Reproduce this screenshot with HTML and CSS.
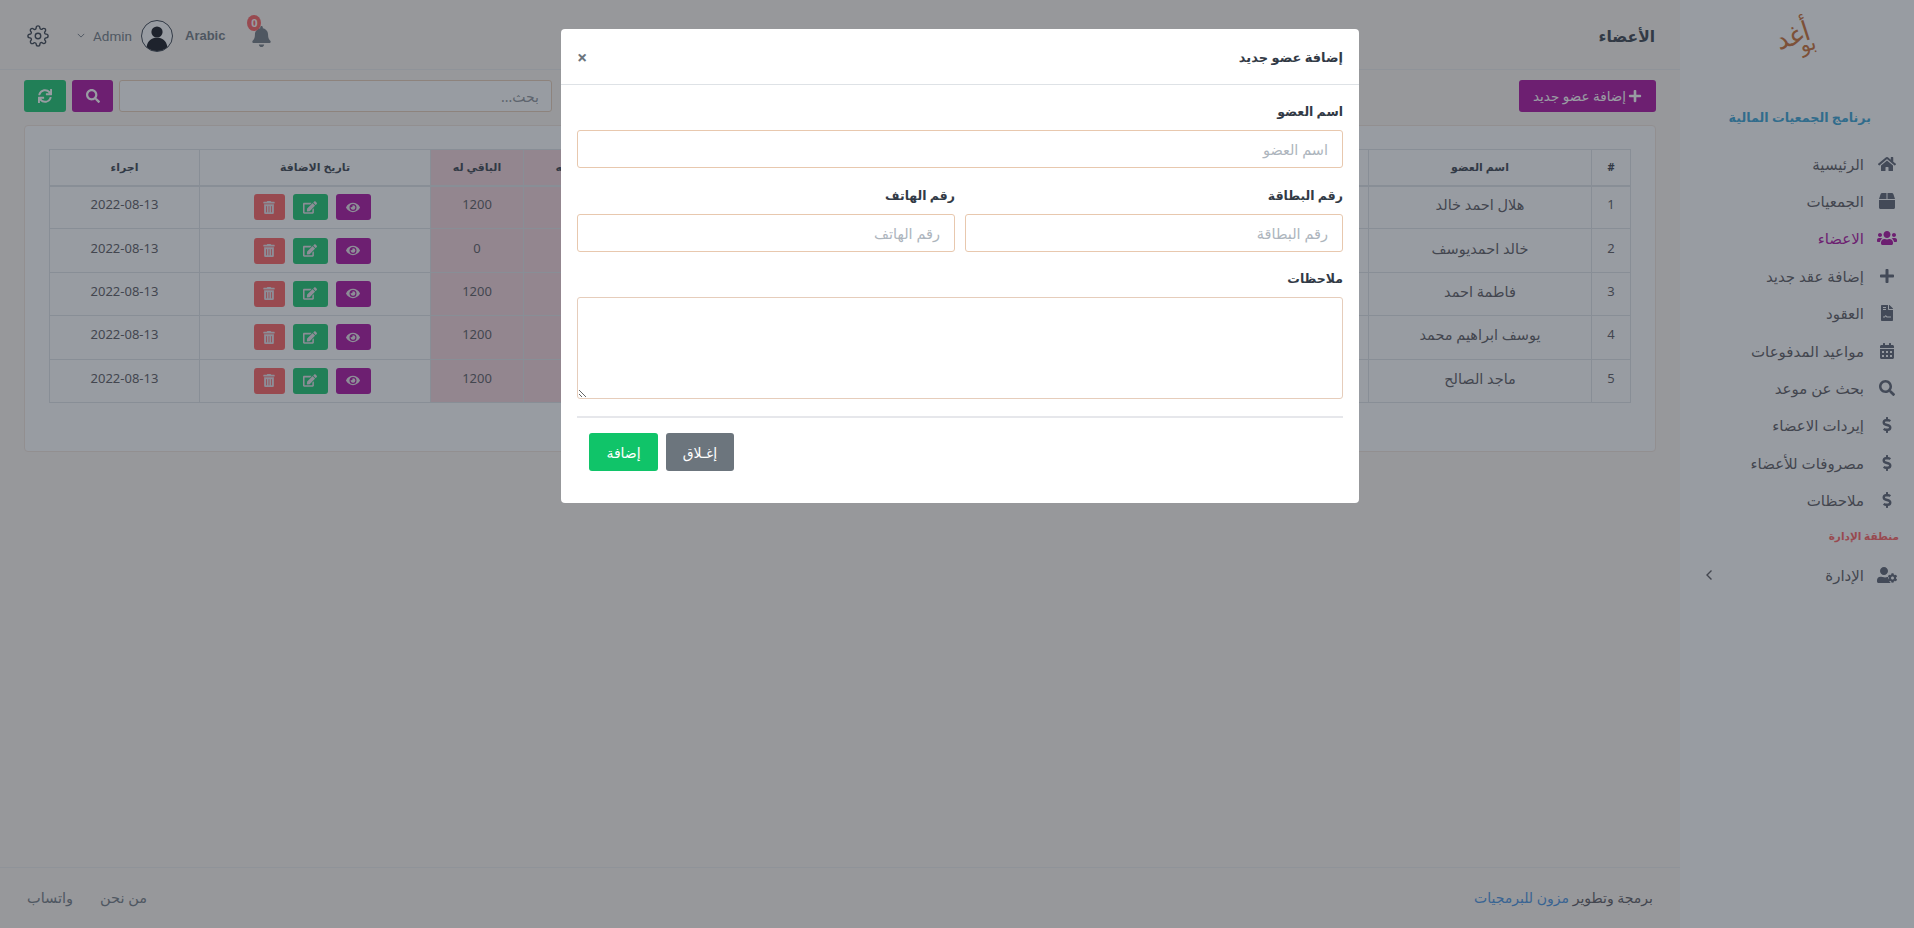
FILE: index.html
```html
<!DOCTYPE html>
<html lang="ar" dir="rtl">
  <head>
    <meta charset="UTF-8" />
    <meta name="viewport" content="width=device-width, initial-scale=1.0" />
    <title>الأعضاء</title>
    <link rel="stylesheet" href="styles.css">
  </head>
  <body>
    <svg class="sprites" xmlns="http://www.w3.org/2000/svg">
      <symbol id="i-home" viewBox="0 0 576 512"><path d="M280.37 148.26L96 300.11V464a16 16 0 0 0 16 16l112.06-.29a16 16 0 0 0 15.92-16V368a16 16 0 0 1 16-16h64a16 16 0 0 1 16 16v95.64a16 16 0 0 0 16 16.05L464 480a16 16 0 0 0 16-16V300L295.67 148.26a12.19 12.19 0 0 0-15.3 0zM571.6 251.47L488 182.56V44.05a12 12 0 0 0-12-12h-56a12 12 0 0 0-12 12v72.61L318.47 43a48 48 0 0 0-61 0L4.34 251.47a12 12 0 0 0-1.6 16.9l25.5 31A12 12 0 0 0 45.15 301l235.22-193.74a12.19 12.19 0 0 1 15.3 0L530.9 301a12 12 0 0 0 16.9-1.6l25.5-31a12 12 0 0 0-1.7-16.93z"/></symbol>
      <symbol id="i-box" viewBox="0 0 512 512"><path d="M509.5 184.6L458.9 32.8C452.4 13.2 434.1 0 413.4 0H272v192h238.7c-.4-2.5-.4-5-1.2-7.4zM240 0H98.6c-20.7 0-39 13.2-45.5 32.8L2.5 184.6c-.8 2.4-.8 4.9-1.2 7.4H240V0zM0 224v240c0 26.5 21.5 48 48 48h416c26.5 0 48-21.5 48-48V224H0z"/></symbol>
      <symbol id="i-users" viewBox="0 0 640 512"><path d="M96 224c35.3 0 64-28.7 64-64s-28.7-64-64-64-64 28.7-64 64 28.7 64 64 64zm448 0c35.3 0 64-28.7 64-64s-28.7-64-64-64-64 28.7-64 64 28.7 64 64 64zm32 32h-64c-17.6 0-33.5 7.1-45.1 18.6 40.3 22.1 68.9 62 75.1 109.4h66c17.7 0 32-14.3 32-32v-32c0-35.3-28.7-64-64-64zm-256 0c61.9 0 112-50.1 112-112S381.9 32 320 32 208 82.1 208 144s50.1 112 112 112zm76.8 32h-8.3c-20.8 10-43.9 16-68.5 16s-47.6-6-68.5-16h-8.3C179.6 288 128 339.6 128 403.2V432c0 26.5 21.5 48 48 48h288c26.5 0 48-21.5 48-48v-28.8c0-63.6-51.6-115.2-115.2-115.2zm-223.7-13.4C161.5 263.1 145.6 256 128 256H64c-35.3 0-64 28.7-64 64v32c0 17.7 14.3 32 32 32h65.9c6.3-47.4 34.9-87.3 75.2-109.4z"/></symbol>
      <symbol id="i-plus" viewBox="0 0 448 512"><path d="M416 208H272V64c0-17.67-14.33-32-32-32h-32c-17.67 0-32 14.33-32 32v144H32c-17.67 0-32 14.33-32 32v32c0 17.67 14.33 32 32 32h144v144c0 17.67 14.33 32 32 32h32c17.67 0 32-14.33 32-32V304h144c17.67 0 32-14.33 32-32v-32c0-17.67-14.33-32-32-32z"/></symbol>
      <symbol id="i-file" viewBox="0 0 384 512"><path d="M224 136V0H24C10.7 0 0 10.7 0 24v464c0 13.3 10.7 24 24 24h336c13.3 0 24-10.7 24-24V160H248c-13.2 0-24-10.8-24-24zM64 72c0-4.4 3.6-8 8-8h80c4.4 0 8 3.6 8 8v16c0 4.4-3.6 8-8 8H72c-4.4 0-8-3.6-8-8V72zm0 64c0-4.4 3.6-8 8-8h80c4.4 0 8 3.6 8 8v16c0 4.4-3.6 8-8 8H72c-4.4 0-8-3.6-8-8v-16zM72 400c-4.4 0-8-3.6-8-8v-16c0-4.4 3.6-8 8-8h40c20-50 50-50 70-15 10 15 30 15 60 15h70c4.4 0 8 3.6 8 8v16c0 4.4-3.6 8-8 8h-70c-40 0-70 0-85-25-10-15-20-10-30 25zM377 105L279.1 7c-4.5-4.5-10.6-7-17-7H256v128h128v-6.1c0-6.3-2.5-12.4-7-16.9z"/></symbol>
      <symbol id="i-calendar" viewBox="0 0 448 512"><path d="M0 464c0 26.5 21.5 48 48 48h352c26.5 0 48-21.5 48-48V192H0v272zm320-196c0-6.6 5.4-12 12-12h40c6.6 0 12 5.4 12 12v40c0 6.6-5.4 12-12 12h-40c-6.6 0-12-5.4-12-12v-40zm0 128c0-6.6 5.4-12 12-12h40c6.6 0 12 5.4 12 12v40c0 6.6-5.4 12-12 12h-40c-6.6 0-12-5.4-12-12v-40zM192 268c0-6.6 5.4-12 12-12h40c6.6 0 12 5.4 12 12v40c0 6.6-5.4 12-12 12h-40c-6.6 0-12-5.4-12-12v-40zm0 128c0-6.6 5.4-12 12-12h40c6.6 0 12 5.4 12 12v40c0 6.6-5.4 12-12 12h-40c-6.6 0-12-5.4-12-12v-40zM64 268c0-6.6 5.4-12 12-12h40c6.6 0 12 5.4 12 12v40c0 6.6-5.4 12-12 12H76c-6.6 0-12-5.4-12-12v-40zm0 128c0-6.6 5.4-12 12-12h40c6.6 0 12 5.4 12 12v40c0 6.6-5.4 12-12 12H76c-6.6 0-12-5.4-12-12v-40zM400 64h-48V16c0-8.8-7.2-16-16-16h-32c-8.8 0-16 7.2-16 16v48H160V16c0-8.8-7.2-16-16-16h-32c-8.8 0-16 7.2-16 16v48H48C21.5 64 0 85.5 0 112v48h448v-48c0-26.5-21.5-48-48-48z"/></symbol>
      <symbol id="i-search" viewBox="0 0 512 512"><path d="M505 442.7L405.3 343c-4.5-4.5-10.6-7-17-7H372c27.6-35.3 44-79.7 44-128C416 93.1 322.9 0 208 0S0 93.1 0 208s93.1 208 208 208c48.3 0 92.7-16.4 128-44v16.3c0 6.4 2.5 12.5 7 17l99.7 99.7c9.4 9.4 24.6 9.4 33.9 0l28.3-28.3c9.4-9.4 9.4-24.6.1-34zM208 336c-70.7 0-128-57.2-128-128 0-70.7 57.2-128 128-128 70.7 0 128 57.2 128 128 0 70.7-57.2 128-128 128z"/></symbol>
      <symbol id="i-dollar" viewBox="0 0 288 512"><path d="M209.2 233.4l-108-31.6C88.7 198.2 80 186.5 80 173.5c0-16.3 13.2-29.5 29.5-29.5h66.3c12.2 0 24.2 3.7 34.2 10.5 6.1 4.1 14.3 3.1 19.5-2l34.8-34c7.1-6.9 6.1-18.4-1.8-24.5C238 74.8 207.4 64.1 176 64V16c0-8.8-7.2-16-16-16h-32c-8.8 0-16 7.2-16 16v48h-2.5C45.8 64-5.4 118.7.5 183.6c4.2 46.1 39.4 83.6 83.8 96.6l102.5 30c12.5 3.7 21.2 15.3 21.2 28.3 0 16.3-13.2 29.5-29.5 29.5h-66.3C100 368 88 364.3 78 357.5c-6.1-4.1-14.3-3.1-19.5 2l-34.8 34c-7.1 6.9-6.1 18.4 1.8 24.5 24.5 19.2 55.1 29.9 86.5 30v48c0 8.8 7.2 16 16 16h32c8.8 0 16-7.2 16-16v-48.2c46.6-.9 90.3-28.6 105.7-72.7 21.5-61.6-14.6-124.8-72.5-141.7z"/></symbol>
      <symbol id="i-usercog" viewBox="0 0 640 512"><path d="M610.5 373.3c2.6-14.1 2.6-28.5 0-42.6l25.8-14.9c3-1.7 4.3-5.2 3.3-8.5-6.7-21.6-18.2-41.2-33.2-57.4-2.3-2.5-6-3.1-9-1.4l-25.8 14.9c-10.9-9.3-23.4-16.5-36.9-21.3v-29.8c0-3.4-2.4-6.4-5.7-7.1-22.3-5-45-4.8-66.2 0-3.3.7-5.7 3.7-5.7 7.1v29.8c-13.5 4.8-26 12-36.9 21.3l-25.8-14.9c-2.9-1.7-6.7-1.1-9 1.4-15 16.2-26.5 35.8-33.2 57.4-1 3.3.4 6.8 3.3 8.5l25.8 14.9c-2.6 14.1-2.6 28.5 0 42.6l-25.8 14.9c-3 1.7-4.3 5.2-3.3 8.5 6.7 21.6 18.2 41.1 33.2 57.4 2.3 2.5 6 3.1 9 1.4l25.8-14.9c10.9 9.3 23.4 16.5 36.9 21.3v29.8c0 3.4 2.4 6.4 5.7 7.1 22.3 5 45 4.8 66.2 0 3.3-.7 5.7-3.7 5.7-7.1v-29.8c13.5-4.8 26-12 36.9-21.3l25.8 14.9c2.9 1.7 6.7 1.1 9-1.4 15-16.2 26.5-35.8 33.2-57.4 1-3.3-.4-6.8-3.3-8.5l-25.8-14.9zM496 400.5c-26.8 0-48.5-21.8-48.5-48.5s21.8-48.5 48.5-48.5 48.5 21.8 48.5 48.5-21.7 48.5-48.5 48.5zM224 256c70.7 0 128-57.3 128-128S294.7 0 224 0 96 57.3 96 128s57.3 128 128 128zm201.2 226.5c-2.3 0-4.6-.3-6.8-.9-8.8-2.5-17-7.7-23.4-14.7-17.4-18.8-30.6-41.8-38.3-66.4-4.2-13.5 1.4-28 13.7-35.2l.4-.2-.4-.2c-12.2-7.1-17.8-21.6-13.6-35.2 1.1-3.4 2.2-6.7 3.5-10-4.3-.5-8.5-.9-12.8-.9h-16.7c-22.2 10.2-46.9 16-72.9 16s-50.6-5.8-72.9-16h-16.7C60.2 288 0 348.2 0 422.4V464c0 26.5 21.5 48 48 48h352c10.3 0 19.8-3.3 27.7-8.8-.9-3.2-1.5-6.5-1.5-9.9v-10.8z"/></symbol>
      <symbol id="i-sync" viewBox="0 0 512 512"><path d="M440.65 12.57l4 82.77A247.16 247.16 0 0 0 255.83 8C134.73 8 33.91 94.92 12.29 209.82A12 12 0 0 0 24.09 224h49.05a12 12 0 0 0 11.67-9.26 175.91 175.91 0 0 1 317-56.94l-101.46-4.86a12 12 0 0 0-12.57 12v47.41a12 12 0 0 0 12 12H500a12 12 0 0 0 12-12V12a12 12 0 0 0-12-12h-47.37a12 12 0 0 0-11.98 12.57zM255.83 432a175.61 175.61 0 0 1-146-77.8l101.8 4.87a12 12 0 0 0 12.57-12v-47.4a12 12 0 0 0-12-12H12a12 12 0 0 0-12 12V500a12 12 0 0 0 12 12h47.35a12 12 0 0 0 12-12.6l-4.15-82.57A247.17 247.17 0 0 0 255.83 504c121.11 0 221.93-86.92 243.55-201.82a12 12 0 0 0-11.8-14.18h-49.05a12 12 0 0 0-11.67 9.26A175.86 175.86 0 0 1 255.83 432z"/></symbol>
      <symbol id="i-trash" viewBox="0 0 448 512"><path d="M32 464a48 48 0 0 0 48 48h288a48 48 0 0 0 48-48V128H32zm272-256a16 16 0 0 1 32 0v224a16 16 0 0 1-32 0zm-96 0a16 16 0 0 1 32 0v224a16 16 0 0 1-32 0zm-96 0a16 16 0 0 1 32 0v224a16 16 0 0 1-32 0zM432 32H312l-9.4-18.7A24 24 0 0 0 281.1 0H166.8a23.72 23.72 0 0 0-21.4 13.3L136 32H16A16 16 0 0 0 0 48v32a16 16 0 0 0 16 16h416a16 16 0 0 0 16-16V48a16 16 0 0 0-16-16z"/></symbol>
      <symbol id="i-edit" viewBox="0 0 576 512"><path d="M402.6 83.2l90.2 90.2c3.8 3.8 3.8 10 0 13.8L274.4 405.6l-92.8 10.3c-12.4 1.4-22.9-9.1-21.5-21.5l10.3-92.8L388.8 83.2c3.8-3.8 10-3.8 13.8 0zm162-22.9l-48.8-48.8c-15.2-15.2-39.9-15.2-55.2 0l-35.4 35.4c-3.8 3.8-3.8 10 0 13.8l90.2 90.2c3.8 3.8 10 3.8 13.8 0l35.4-35.4c15.2-15.3 15.2-40 0-55.2zM384 346.2V448H64V128h229.8c3.2 0 6.2-1.3 8.5-3.5l40-40c7.6-7.6 2.2-20.5-8.5-20.5H48C21.5 64 0 85.5 0 112v352c0 26.5 21.5 48 48 48h352c26.5 0 48-21.5 48-48V306.2c0-10.7-12.9-16-20.5-8.5l-40 40c-2.2 2.3-3.5 5.3-3.5 8.5z"/></symbol>
      <symbol id="i-eye" viewBox="0 0 576 512"><path d="M572.52 241.4C518.29 135.59 410.93 64 288 64S57.68 135.64 3.48 241.41a32.35 32.35 0 0 0 0 29.19C57.71 376.41 165.07 448 288 448s230.32-71.64 284.52-177.41a32.35 32.35 0 0 0 0-29.19zM288 400a144 144 0 1 1 144-144 143.93 143.93 0 0 1-144 144zm0-240a95.31 95.31 0 0 0-25.31 3.79 47.85 47.85 0 0 1-66.9 66.9A95.78 95.78 0 1 0 288 160z"/></symbol>
      <symbol id="i-bell" viewBox="0 0 448 512"><path d="M224 512c35.32 0 63.97-28.65 63.97-64H160.03c0 35.35 28.65 64 63.97 64zm215.39-149.71c-19.32-20.76-55.47-51.99-55.47-154.29 0-77.7-54.48-139.9-127.94-155.16V32c0-17.67-14.32-32-31.98-32s-31.98 14.33-31.98 32v20.84C118.56 68.1 64.08 130.3 64.08 208c0 102.3-36.15 133.53-55.47 154.29-6 6.45-8.66 14.16-8.61 21.71.11 16.4 12.98 32 32.1 32h383.8c19.12 0 32-15.6 32.1-32 .05-7.55-2.61-15.27-8.61-21.71z"/></symbol>
    </svg>

    <div class="app">
      <aside class="sidebar">
        <div class="logo"><span class="logo-top">أغد</span><span class="logo-bottom">بو</span></div>
        <h4 class="brand">برنامج الجمعيات المالية</h4>
        <ul class="menu">
          <li><svg class="ico"><use href="#i-home"/></svg><span>الرئيسية</span></li>
          <li><svg class="ico"><use href="#i-box"/></svg><span>الجمعيات</span></li>
          <li class="active"><svg class="ico"><use href="#i-users"/></svg><span>الاعضاء</span></li>
          <li><svg class="ico"><use href="#i-plus"/></svg><span>إضافة عقد جديد</span></li>
          <li><svg class="ico"><use href="#i-file"/></svg><span>العقود</span></li>
          <li><svg class="ico"><use href="#i-calendar"/></svg><span>مواعيد المدفوعات</span></li>
          <li><svg class="ico"><use href="#i-search"/></svg><span>بحث عن موعد</span></li>
          <li><svg class="ico"><use href="#i-dollar"/></svg><span>إيردات الاعضاء</span></li>
          <li><svg class="ico"><use href="#i-dollar"/></svg><span>مصروفات للأعضاء</span></li>
          <li><svg class="ico"><use href="#i-dollar"/></svg><span>ملاحظات</span></li>
          <li class="menu-title">منطقة الإدارة</li>
          <li><svg class="ico"><use href="#i-usercog"/></svg><span>الإدارة</span>
            <svg class="menu-arrow" viewBox="0 0 8 12"><path d="M6.5 1.5 2 6l4.5 4.5" fill="none" stroke="currentColor" stroke-width="1.4"/></svg>
          </li>
        </ul>
      </aside>

      <div class="main">
        <header class="topbar">
          <h1 class="page-title">الأعضاء</h1>
          <div class="top-tools">
            <div class="bell">
              <svg class="bell-ico"><use href="#i-bell"/></svg>
              <span class="badge">0</span>
            </div>
            <span class="lang">Arabic</span>
            <svg class="avatar" viewBox="0 0 32 32">
              <circle cx="16" cy="16" r="15.5" fill="#fff" stroke="#323a46"/>
              <circle cx="16" cy="12" r="5.6" fill="#0b0d14"/>
              <path d="M5.6 27c1-6.6 5-9.2 10.4-9.2s9.400 2.600 10.400 9.200a15.500 15.500 0 0 1-20.800 0z" fill="#0b0d14"/>
            </svg>
            <span class="user">Admin</span>
            <svg class="caret" viewBox="0 0 10 6"><path d="M1 1l4 4 4-4" fill="none" stroke="currentColor" stroke-width="1.200"/></svg>
            <svg class="gear" viewBox="0 0 24 24" fill="none" stroke="currentColor" stroke-width="1.500">
              <circle cx="12" cy="12" r="3"/>
              <path d="M19.4 15a1.65 1.65 0 0 0 .33 1.82l.06.06a2 2 0 0 1 0 2.83 2 2 0 0 1-2.83 0l-.06-.06a1.65 1.65 0 0 0-1.82-.33 1.65 1.65 0 0 0-1 1.51V21a2 2 0 0 1-2 2 2 2 0 0 1-2-2v-.09A1.65 1.65 0 0 0 9 19.4a1.65 1.65 0 0 0-1.82.33l-.06.06a2 2 0 0 1-2.83 0 2 2 0 0 1 0-2.83l.06-.06a1.65 1.65 0 0 0 .33-1.82 1.65 1.65 0 0 0-1.51-1H3a2 2 0 0 1-2-2 2 2 0 0 1 2-2h.09A1.65 1.65 0 0 0 4.6 9a1.65 1.65 0 0 0-.33-1.82l-.06-.06a2 2 0 0 1 0-2.83 2 2 0 0 1 2.83 0l.06.06a1.65 1.65 0 0 0 1.82.33H9a1.65 1.65 0 0 0 1-1.51V3a2 2 0 0 1 2-2 2 2 0 0 1 2 2v.09a1.65 1.65 0 0 0 1 1.51 1.65 1.65 0 0 0 1.82-.33l.06-.06a2 2 0 0 1 2.83 0 2 2 0 0 1 0 2.83l-.06.06a1.65 1.65 0 0 0-.33 1.82V9a1.65 1.65 0 0 0 1.51 1H21a2 2 0 0 1 2 2 2 2 0 0 1-2 2h-.09a1.65 1.65 0 0 0-1.51 1z"/>
            </svg>
          </div>
        </header>

        <div class="toolbar">
          <button class="btn btn-purple btn-add"><svg class="ico-sm"><use href="#i-plus"/></svg>إضافة عضو جديد</button>
          <div class="toolbar-search">
            <input class="search-input" type="text" placeholder="بحث..." />
            <button class="btn btn-purple btn-search"><svg class="ico-sm"><use href="#i-search"/></svg></button>
            <button class="btn btn-green btn-refresh"><svg class="ico-sm"><use href="#i-sync"/></svg></button>
          </div>
        </div>

        <div class="card">
          <table class="members">
            <colgroup>
              <col class="c-num" /><col class="c-name" /><col class="c-mid" /><col class="c-mid" /><col class="c-mid" />
              <col class="c-total" /><col class="c-rest" /><col class="c-date" /><col class="c-act" />
            </colgroup>
            <thead>
              <tr>
                <th>#</th><th>اسم العضو</th><th>رقم البطاقة</th><th>رقم الهاتف</th><th>المدفوع</th>
                <th class="pink">إجمالي له</th><th class="pink">الباقي له</th><th>تاريخ الاضافة</th><th>اجراء</th>
              </tr>
            </thead>
            <tbody>
              <tr>
                <td>1</td><td class="name">هلال احمد خالد</td><td></td><td></td><td></td>
                <td class="pink">1200</td><td class="pink">1200</td>
                <td class="td-actions"><div class="actions"><button class="act btn-purple act-view"><svg><use href="#i-eye"/></svg></button><button class="act btn-green act-edit"><svg><use href="#i-edit"/></svg></button><button class="act btn-red act-del"><svg><use href="#i-trash"/></svg></button></div></td>
                <td>2022-08-13</td>
              </tr>
              <tr>
                <td>2</td><td class="name">خالد احمديوسف</td><td></td><td></td><td></td>
                <td class="pink">1200</td><td class="pink">0</td>
                <td class="td-actions"><div class="actions"><button class="act btn-purple act-view"><svg><use href="#i-eye"/></svg></button><button class="act btn-green act-edit"><svg><use href="#i-edit"/></svg></button><button class="act btn-red act-del"><svg><use href="#i-trash"/></svg></button></div></td>
                <td>2022-08-13</td>
              </tr>
              <tr>
                <td>3</td><td class="name">فاطمة احمد</td><td></td><td></td><td></td>
                <td class="pink">1200</td><td class="pink">1200</td>
                <td class="td-actions"><div class="actions"><button class="act btn-purple act-view"><svg><use href="#i-eye"/></svg></button><button class="act btn-green act-edit"><svg><use href="#i-edit"/></svg></button><button class="act btn-red act-del"><svg><use href="#i-trash"/></svg></button></div></td>
                <td>2022-08-13</td>
              </tr>
              <tr>
                <td>4</td><td class="name">يوسف ابراهيم محمد</td><td></td><td></td><td></td>
                <td class="pink">1200</td><td class="pink">1200</td>
                <td class="td-actions"><div class="actions"><button class="act btn-purple act-view"><svg><use href="#i-eye"/></svg></button><button class="act btn-green act-edit"><svg><use href="#i-edit"/></svg></button><button class="act btn-red act-del"><svg><use href="#i-trash"/></svg></button></div></td>
                <td>2022-08-13</td>
              </tr>
              <tr>
                <td>5</td><td class="name">ماجد الصالح</td><td></td><td></td><td></td>
                <td class="pink">1200</td><td class="pink">1200</td>
                <td class="td-actions"><div class="actions"><button class="act btn-purple act-view"><svg><use href="#i-eye"/></svg></button><button class="act btn-green act-edit"><svg><use href="#i-edit"/></svg></button><button class="act btn-red act-del"><svg><use href="#i-trash"/></svg></button></div></td>
                <td>2022-08-13</td>
              </tr>
            </tbody>
          </table>
        </div>

        <footer class="footer">
          <div>برمجة وتطوير <a class="footer-brand">مزون للبرمجيات</a></div>
          <div class="footer-links"><a>من نحن</a><a>واتساب</a></div>
        </footer>
      </div>
    </div>

    <div class="backdrop"></div>

    <div class="modal">
      <div class="modal-head">
        <h4 class="modal-title">إضافة عضو جديد</h4>
        <span class="modal-close">×</span>
      </div>
      <form class="modal-body">
        <div class="field field-first">
          <label>اسم العضو</label>
          <input class="form-input" type="text" placeholder="اسم العضو" />
        </div>
        <div class="field-row">
          <div class="field">
            <label>رقم البطاقة</label>
            <input class="form-input" type="text" placeholder="رقم البطاقة" />
          </div>
          <div class="field">
            <label>رقم الهاتف</label>
            <input class="form-input" type="text" placeholder="رقم الهاتف" />
          </div>
        </div>
        <div class="field">
          <label>ملاحظات</label>
          <textarea class="form-input form-area"></textarea>
        </div>
        <div class="modal-foot">
          <button type="button" class="foot-btn foot-add">إضافة</button>
          <button type="button" class="foot-btn foot-close">إغـلاق</button>
        </div>
      </form>
    </div>
  </body>
</html>
```

FILE: styles.css
```css
* {
  margin: 0;
  padding: 0;
  box-sizing: border-box;
}
html,
body {
  height: 928px;
  overflow: hidden;
}
body {
  font-family: "Noto Sans", "DejaVu Sans", sans-serif;
  font-size: 14px;
  color: #545258;
  background: #fcf6f0;
}
.sprites {
  display: none;
}
.app {
  display: flex;
  height: 928px;
}

/* sidebar */
.sidebar {
  width: 234px;
  flex: none;
  background: #fff;
}
.logo {
  height: 70px;
  position: relative;
  color: #c8682a;
  font-family: "DejaVu Serif", serif;
}
.logo-top {
  position: absolute;
  right: 103px;
  top: 20px;
  font-size: 27px;
  transform: rotate(-18deg);
}
.logo-bottom {
  position: absolute;
  right: 98px;
  top: 32px;
  font-size: 21px;
  transform: rotate(-18deg);
}
.brand {
  margin-top: 33px;
  padding-right: 43px;
  height: 28px;
  font-size: 12.700px;
  font-weight: 700;
  line-height: 28px;
  color: #319fd2;
  white-space: nowrap;
}
.menu {
  list-style: none;
  margin-top: 14px;
}
.menu li {
  display: flex;
  align-items: center;
  height: 37.4px;
  padding-right: 17px;
  font-size: 15px;
  white-space: nowrap;
}
.menu .ico {
  width: 20px;
  height: 16px;
  margin-left: 13px;
  fill: #545a6a;
}
.menu .active {
  color: #a8049c;
}
.menu .active .ico {
  fill: #a8049c;
}
.menu .menu-title {
  padding-right: 15px;
  padding-bottom: 3px;
  font-size: 10.5px;
  font-weight: 700;
  color: #ff5b5b;
}
.menu-arrow {
  width: 8px;
  height: 12px;
  margin-right: auto;
  margin-left: 25px;
}

/* top bar */
.main {
  flex: 1;
  display: flex;
  flex-direction: column;
  min-width: 0;
}
.topbar {
  height: 70px;
  flex: none;
  display: flex;
  align-items: center;
  justify-content: space-between;
  padding: 2px 25px 0 27px;
  border-bottom: 1px solid #ececec;
}
.page-title {
  font-size: 15.500px;
  font-weight: 700;
  color: #323a46;
}
.top-tools {
  display: flex;
  align-items: center;
  color: #6c757d;
}
.bell {
  position: relative;
  width: 19px;
  height: 20px;
  margin-left: 27px;
}
.bell-ico {
  display: block;
  width: 19px;
  height: 21px;
  fill: #6c757d;
}
.badge {
  position: absolute;
  top: -11px;
  right: 10px;
  width: 14px;
  height: 16px;
  border-radius: 50%;
  background: #ff5b5b;
  color: #fff;
  font-size: 11px;
  font-weight: 700;
  line-height: 16px;
  text-align: center;
}
.lang {
  font-family: "Liberation Sans", sans-serif;
  font-size: 13px;
  font-weight: 700;
  margin-left: 12px;
}
.avatar {
  width: 32px;
  height: 32px;
  margin-left: 9px;
}
.user {
  font-family: "Roboto", sans-serif;
  font-size: 13.500px;
  margin-left: 8px;
}
.caret {
  width: 8px;
  height: 5px;
  margin-left: 28px;
}
.gear {
  width: 22px;
  height: 22px;
  color: #323a46;
}

/* toolbar and table */
.toolbar {
  display: flex;
  justify-content: space-between;
  margin: 10px 24px 13px;
}
.btn {
  height: 32px;
  border: 0;
  border-radius: 3px;
  color: #fff;
  font: inherit;
  display: flex;
  align-items: center;
  justify-content: center;
}
.btn-purple {
  background: #a8049c;
}
.btn-green {
  background: #10c469;
}
.btn-red {
  background: #ff5b5b;
}
.btn-add {
  width: 137px;
  font-size: 13.500px;
}
.ico-sm {
  width: 14px;
  height: 14px;
  fill: #fff;
}
.btn-add .ico-sm {
  margin-left: 2px;
}
.toolbar-search {
  display: flex;
  gap: 6px;
}
.search-input {
  width: 433px;
  height: 32px;
  border: 1px solid #e9cdb4;
  border-radius: 3px;
  padding: 0 12px;
  font: inherit;
  font-size: 14px;
  background: #fff;
}
.search-input::placeholder {
  color: #8a8f96;
}
.btn-search {
  width: 41px;
}
.btn-refresh {
  width: 42px;
}
.card {
  margin: 0 24px;
  height: 327px;
  padding: 23px 24px 0 25px;
  background: #fff;
  border: 1px solid #f3e4da;
  border-radius: 4px;
}
.members {
  width: 1581px;
  table-layout: fixed;
  border-collapse: collapse;
  color: #545258;
  text-align: center;
}
.c-num { width: 39px; }
.c-name { width: 223px; }
.c-mid { width: 243px; }
.c-total { width: 116px; }
.c-rest { width: 93px; }
.c-date { width: 231px; }
.c-act { width: 150px; }
.members th,
.members td {
  border: 1px solid #dee2e6;
}
.members th {
  height: 36px;
  padding-bottom: 2px;
  border-bottom-width: 2px;
  font-size: 11px;
  font-weight: 700;
  color: #323a46;
}
.members td {
  height: 43.4px;
  padding-bottom: 6px;
  font-size: 13px;
}
.members .name {
  font-size: 14.500px;
}
.members .td-actions {
  padding: 0 6px 0 0;
}
.members .pink {
  background: #f5d3d8;
}
.actions {
  display: flex;
  justify-content: center;
  gap: 8px;
  direction: ltr;
  flex-direction: row-reverse;
}
.act {
  height: 26px;
  border: 0;
  border-radius: 3px;
  display: flex;
  align-items: center;
  justify-content: center;
}
.act svg {
  width: 14px;
  height: 13px;
  fill: #e8e0e8;
}
.act-view { width: 35px; }
.act-edit { width: 35px; }
.act-del { width: 31px; }

/* footer */
.footer {
  margin-top: auto;
  height: 61px;
  padding: 0 27px 2px;
  border-top: 1px solid #ececec;
  display: flex;
  align-items: center;
  justify-content: space-between;
  font-size: 14px;
  color: #545258;
}
.footer-brand {
  color: #3f8ee0;
}
.footer-links {
  display: flex;
  gap: 27px;
  font-size: 14.500px;
  color: #6c757d;
}

/* modal */
.backdrop {
  position: fixed;
  inset: 0;
  background: #323a46;
  opacity: 0.5;
}
.modal {
  position: fixed;
  left: 561px;
  top: 29px;
  width: 798px;
  height: 474px;
  background: #fff;
  border-radius: 4px;
}
.modal-head {
  height: 56px;
  padding: 0 16px;
  display: flex;
  align-items: center;
  justify-content: space-between;
  border-bottom: 1px solid #dee2e6;
}
.modal-title {
  font-size: 13px;
  font-weight: 700;
  color: #323a46;
}
.modal-close {
  font-size: 18px;
  font-weight: 700;
  color: #6c757d;
}
.modal-body {
  padding: 16px 16px 0;
}
.field {
  display: flex;
  flex-direction: column;
  flex: 1;
  margin-bottom: 16px;
}
.field-first {
  margin-bottom: 17px;
}
.field label {
  height: 29px;
  padding-top: 2px;
  font-size: 12.500px;
  font-weight: 700;
  color: #323a46;
}
.field-row {
  display: flex;
  gap: 10px;
}
.form-input {
  height: 38px;
  border: 1px solid #e8c8ae;
  border-radius: 3px;
  padding: 0 14px;
  font: inherit;
  font-size: 14.500px;
  background: #fff;
  color: #323a46;
}
.form-input::placeholder {
  color: #adb5bd;
}
.form-area {
  height: 102px;
  padding: 8px 14px;
  border-color: #e6cdbb;
}
.modal-foot {
  display: flex;
  flex-direction: row-reverse;
  justify-content: flex-start;
  gap: 8px;
  margin-top: 17px;
  padding: 15px 12px 0;
  border-top: 2px solid #e6e7eb;
}
.foot-btn {
  height: 38px;
  border: 0;
  border-radius: 3px;
  color: #fff;
  font: inherit;
  font-size: 14px;
}
.foot-add {
  width: 69px;
  background: #10c469;
}
.foot-close {
  width: 68px;
  background: #6c757d;
}
```
